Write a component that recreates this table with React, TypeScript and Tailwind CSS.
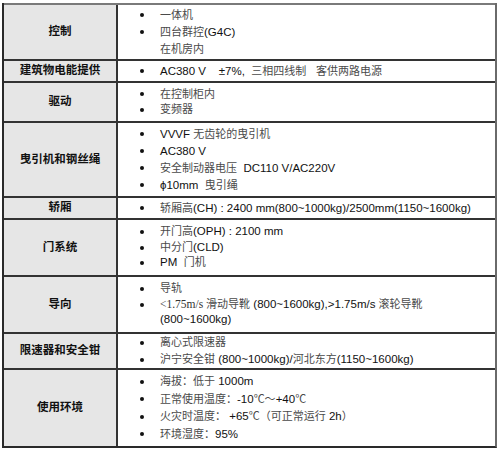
import React from "react";

type Line = { b: boolean; t?: string; node?: React.ReactNode };
type Row = { title: string; h: string; lh: string; lines: Line[] };

function Rich({ t }: { t: string }) {
  const parts = t.split(/([\u2E80-\u9FFF\u3000-\u303F\uFF00-\uFFEF℃]+)/);
  return (
    <>
      {parts.map((p, i) =>
        i % 2 === 1 ? (
          <span key={i} className="text-[11px] text-[#4a4a4a]">
            {p}
          </span>
        ) : (
          <span key={i} className="text-[11.5px]">
            {p}
          </span>
        )
      )}
    </>
  );
}

const rows: Row[] = [
  {
    title: "控制",
    h: "h-[56px]",
    lh: "leading-[17px]",
    lines: [
      { b: true, t: "一体机" },
      { b: true, t: "四台群控(G4C)" },
      { b: false, t: "在机房内" },
    ],
  },
  {
    title: "建筑物电能提供",
    h: "h-[22px]",
    lh: "leading-[17px]",
    lines: [{ b: true, t: "AC380 V    ±7%,  三相四线制   客供两路电源" }],
  },
  {
    title: "驱动",
    h: "h-[40px]",
    lh: "leading-[15.5px]",
    lines: [
      { b: true, t: "在控制柜内" },
      { b: true, t: "变频器" },
    ],
  },
  {
    title: "曳引机和钢丝绳",
    h: "h-[75px]",
    lh: "leading-[17px]",
    lines: [
      { b: true, t: "VVVF 无齿轮的曳引机" },
      { b: true, t: "AC380 V" },
      { b: true, t: "安全制动器电压  DC110 V/AC220V" },
      { b: true, t: "ϕ10mm  曳引绳" },
    ],
  },
  {
    title: "轿厢",
    h: "h-[22px]",
    lh: "leading-[17px]",
    lines: [{ b: true, t: "轿厢高(CH) : 2400 mm(800~1000kg)/2500mm(1150~1600kg)" }],
  },
  {
    title: "门系统",
    h: "h-[57px]",
    lh: "leading-[15.5px]",
    lines: [
      { b: true, t: "开门高(OPH) : 2100 mm" },
      { b: true, t: "中分门(CLD)" },
      { b: true, t: "PM  门机" },
    ],
  },
  {
    title: "导向",
    h: "h-[57px]",
    lh: "leading-[15.5px]",
    lines: [
      { b: true, t: "导轨" },
      {
        b: true,
        node: (
          <>
            <span className="[font-family:'Liberation_Serif',serif] text-[11.5px] text-[#333]">&lt;1.75m/s </span>
            <Rich t="滑动导靴 (800~1600kg),>1.75m/s 滚轮导靴" />
          </>
        ),
      },
      { b: false, t: "(800~1600kg)" },
    ],
  },
  {
    title: "限速器和安全钳",
    h: "h-[36px]",
    lh: "leading-[17px]",
    lines: [
      { b: true, t: "离心式限速器" },
      { b: true, t: "沪宁安全钳 (800~1000kg)/河北东方(1150~1600kg)" },
    ],
  },
  {
    title: "使用环境",
    h: "h-[78px]",
    lh: "leading-[17.5px]",
    lines: [
      { b: true, t: "海拔：低于 1000m" },
      { b: true, t: "正常使用温度：-10℃～+40℃" },
      { b: true, t: "火灾时温度： +65℃（可正常运行 2h）" },
      { b: true, t: "环境湿度：95%" },
    ],
  },
];

export default function App() {
  return (
    <div className="w-[500px] h-[450px] bg-white pt-[3px] pl-[2px] [font-family:'Liberation_Sans','Noto_Sans_CJK_SC',sans-serif]">
      <div className="w-[495px] border-l-2 border-b-2 border-r-2 border-l-[#2a2a2a] border-b-[#2a2a2a] border-r-[#6a6a6a]">
        {rows.map((r, i) => (
          <div
            key={i}
            className={`flex border-t-2 ${i === 0 ? "border-t-[#7a7a7a]" : "border-t-[#333333]"} ${r.h}`}
          >
            <div className="w-[114px] shrink-0 bg-[#e6e6e6] border-r-2 border-r-[#333333] flex items-center justify-center text-[11.5px] font-bold text-[#111]">
              {r.title}
            </div>
            <div className={`flex-1 flex flex-col justify-center text-[11px] text-[#111] ${r.lh} whitespace-pre`}>
              {r.lines.map((l, j) => (
                <div key={j} className="flex items-center">
                  <div className="w-[42px] shrink-0 flex items-center pl-[22px]">
                    {l.b && <span className="block w-[4px] h-[4px] rounded-full bg-[#111]" />}
                  </div>
                  <div>{l.node ?? <Rich t={l.t ?? ""} />}</div>
                </div>
              ))}
            </div>
          </div>
        ))}
      </div>
    </div>
  );
}
